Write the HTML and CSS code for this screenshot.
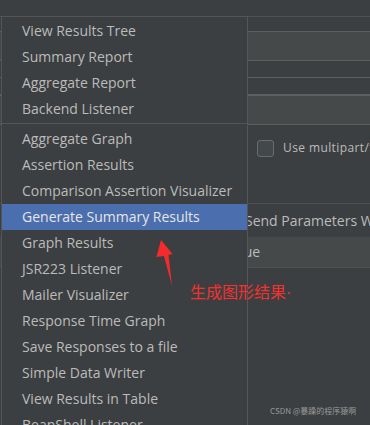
FILE: index.html
```html
<!DOCTYPE html>
<html lang="en">
<head>
    <meta charset="UTF-8">
    <title>Add Listener</title>
    <link rel="stylesheet" href="styles.css">
</head>
<body>

<div class="screen">
    <!-- form behind the popup -->
    <div class="form">
        <div class="form-top"></div>
        <div class="form-gap"></div>
        <div class="form-field"></div>
        <div class="form-strip"></div>
        <div class="form-strip"></div>
        <div class="form-field"></div>
        <div class="form-options">
            <span class="check"></span>
            <span class="check-label">Use multipart/form-data</span>
        </div>
        <div class="form-label">Send Parameters With the Request:</div>
        <div class="form-header"><span>Value</span></div>
    </div>

    <!-- popup menu -->
    <div class="menu">
        <div class="menu-item">View Results Tree</div>
        <div class="menu-item">Summary Report</div>
        <div class="menu-item">Aggregate Report</div>
        <div class="menu-item">Backend Listener</div>
        <div class="menu-sep"></div>
        <div class="menu-item">Aggregate Graph</div>
        <div class="menu-item">Assertion Results</div>
        <div class="menu-item">Comparison Assertion Visualizer</div>
        <div class="menu-item selected">Generate Summary Results</div>
        <div class="menu-item">Graph Results</div>
        <div class="menu-item">JSR223 Listener</div>
        <div class="menu-item">Mailer Visualizer</div>
        <div class="menu-item">Response Time Graph</div>
        <div class="menu-item">Save Responses to a file</div>
        <div class="menu-item">Simple Data Writer</div>
        <div class="menu-item">View Results in Table</div>
        <div class="menu-item">BeanShell Listener</div>
    </div>

    <svg class="arrow" width="30" height="50" viewBox="150 238 30 50">
        <polygon points="161,240 172.5,254 168.5,255 172,286 164,256 156.5,257" fill="#f52b2b"/>
    </svg>
    <div class="note">生成图形结果<span class="dot">·</span></div>
    <div class="watermark">CSDN @暴躁的程序猿啊</div>
</div>

</body>
</html>
```

FILE: styles.css
```css
body {
    margin: 0;
    background: #3c3f41;
    font-family: "Segoe UI", "Open Sans", "Noto Sans", sans-serif;
}

.screen {
    position: relative;
    width: 370px;
    height: 425px;
    overflow: hidden;
    background: #3c3f41;
}

/* background form */
.form {
    color: #bbbbbb;
}

.form-top {
    height: 16px;
    border-bottom: 1px solid #515151;
}

.form-gap {
    height: 14px;
}

.form-field {
    height: 28px;
    background: #45494a;
    border-top: 1px solid #5e6060;
    border-bottom: 1px solid #5e6060;
}

.form-strip {
    height: 16px;
    border-bottom: 1px solid #5e6060;
}

.form-options {
    height: 78px;
    display: flex;
    align-items: flex-start;
    padding-left: 257px;
    border-bottom: 1px solid #515151;
}

.check {
    flex-shrink: 0;
    width: 15px;
    height: 15px;
    margin-top: 15px;
    border: 1px solid #6b6b6b;
    border-radius: 3px;
    background: #43494a;
}

.check-label {
    margin-top: 14px;
    margin-left: 9px;
    font-size: 12px;
    letter-spacing: 0.4px;
    white-space: nowrap;
}

.form-label {
    height: 33px;
    line-height: 33px;
    padding-left: 245px;
    font-size: 14px;
    white-space: nowrap;
}

.form-header {
    height: 30px;
    line-height: 30px;
    background: #45494a;
    border-bottom: 1px solid #515151;
    padding-left: 224px;
    font-size: 14px;
}

/* popup menu */
.menu {
    position: absolute;
    left: 1px;
    top: 16px;
    width: 245px;
    height: 440px;
    padding-top: 1px;
    background: #3c3f41;
    border: 1px solid #555555;
    border-bottom: none;
    color: #bbbbbb;
}

.menu-item {
    height: 26px;
    line-height: 26px;
    padding-left: 20px;
    font-size: 14px;
    white-space: nowrap;
}

.menu-item.selected {
    background: #4b6eaf;
    color: #e6e6e6;
}

.menu-sep {
    height: 1px;
    margin: 1px 0 2px;
    background: #555555;
}

.arrow {
    position: absolute;
    left: 150px;
    top: 238px;
}

.note {
    position: absolute;
    left: 190px;
    top: 281px;
    font-family: "Noto Sans CJK SC", sans-serif;
    font-size: 16px;
    line-height: 20px;
    color: #f53030;
}

.note .dot {
    font-family: "Liberation Sans", sans-serif;
}

.watermark {
    position: absolute;
    left: 270px;
    top: 405px;
    font-family: "Noto Sans CJK SC", sans-serif;
    font-size: 8px;
    color: #a8a8a8;
    opacity: 0.85;
}
```
